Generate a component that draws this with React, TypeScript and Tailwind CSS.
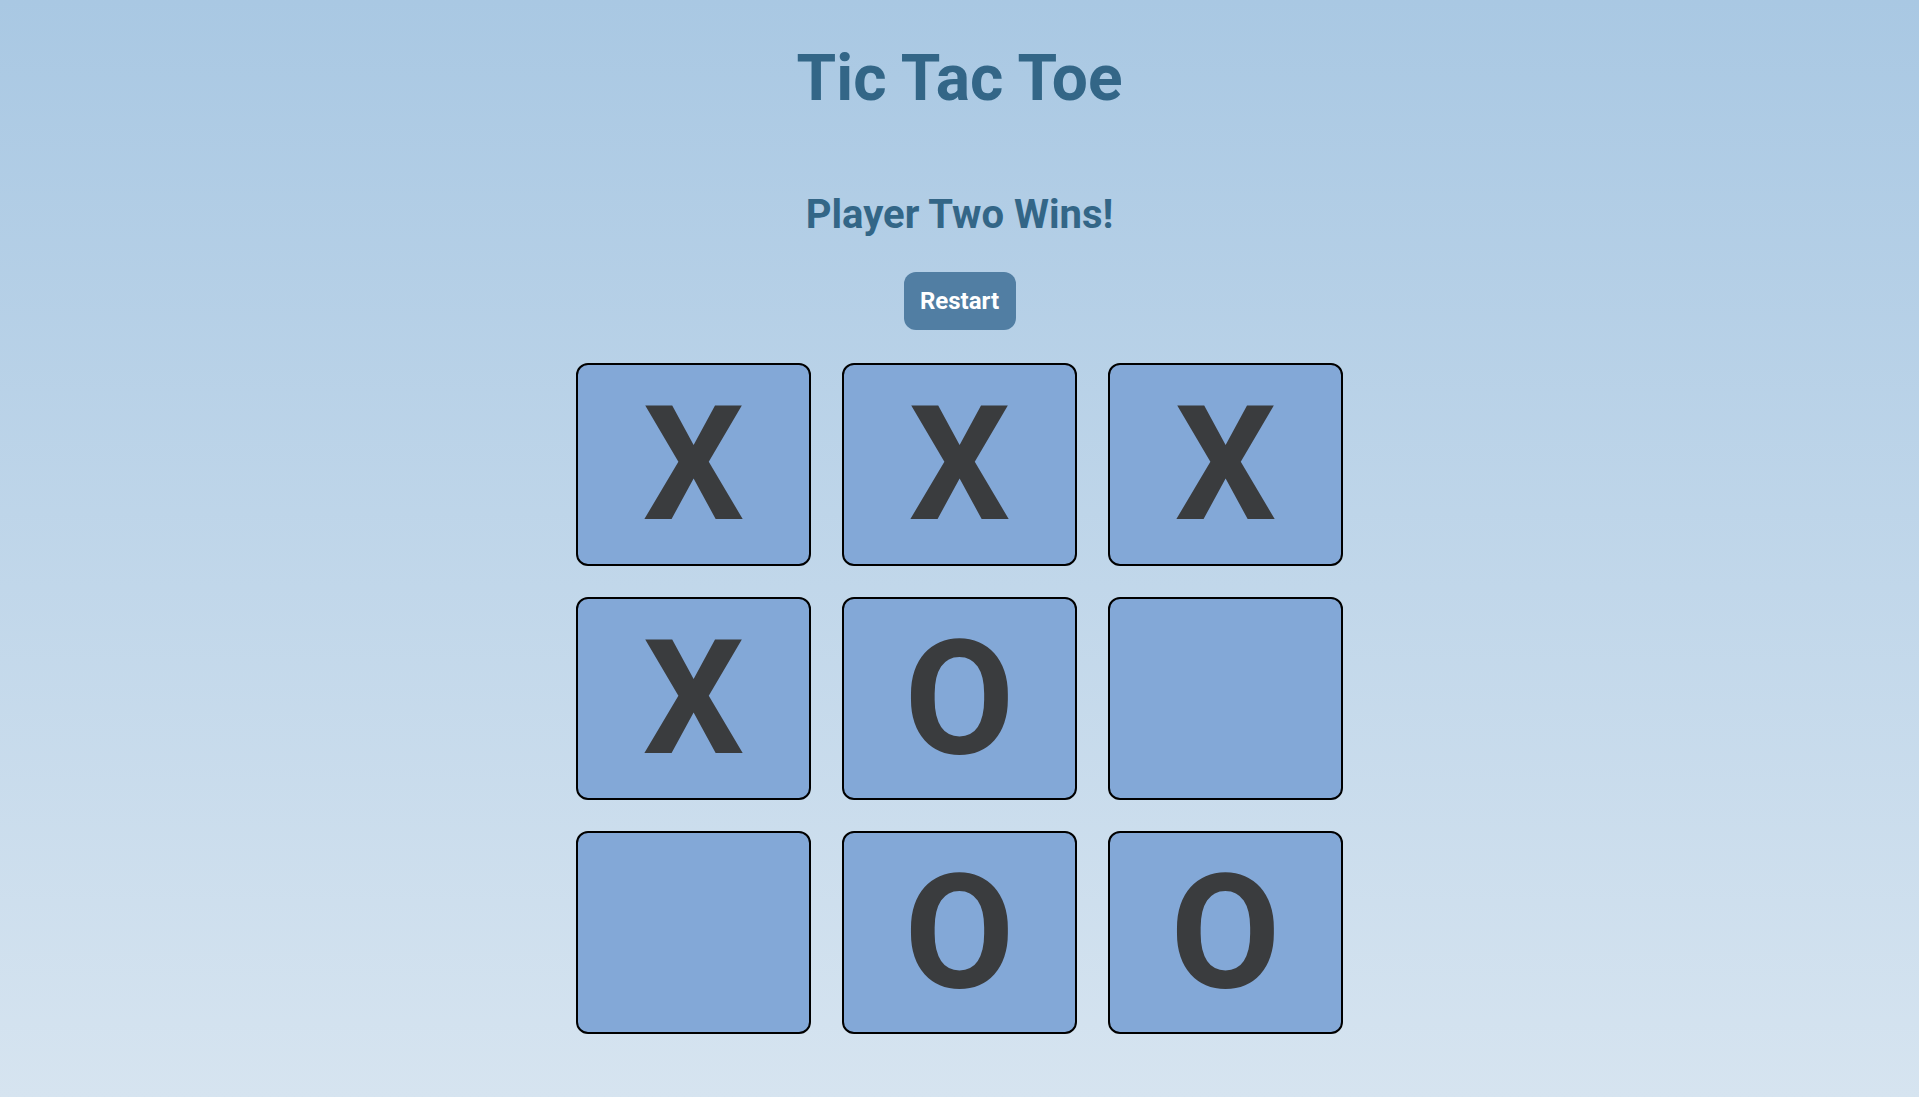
import React from "react";

const board: string[] = ["X", "X", "X", "X", "O", "", "", "O", "O"];

export default function App() {
  return (
    <div
      className="min-h-screen w-full flex flex-col items-center bg-gradient-to-b from-[#a9c8e3] to-[#d6e4f0]"
      style={{ fontFamily: "Roboto, 'Liberation Sans', sans-serif" }}
    >
      <h1 className="mt-[47px] text-[64px] leading-none font-bold text-[#336687]">Tic Tac Toe</h1>
      <h2 className="mt-[84px] text-[40px] leading-none font-bold text-[#336687]">Player Two Wins!</h2>
      <button className="mt-[37px] w-[112px] h-[58px] rounded-[12px] bg-[#517ea3] text-white text-[24px] font-bold leading-none flex items-center justify-center">
        Restart
      </button>
      <div className="mt-[33px] grid grid-cols-[235px_235px_235px] gap-x-[31px] gap-y-[31px]">
        {board.map((v, i) => (
          <div
            key={i}
            className="w-[235px] h-[203px] border-2 border-black rounded-[12px] bg-[#83a8d7] flex items-center justify-center text-[160px] leading-none font-bold text-[#3a3c3e]"
          >
            {v}
          </div>
        ))}
      </div>
    </div>
  );
}
